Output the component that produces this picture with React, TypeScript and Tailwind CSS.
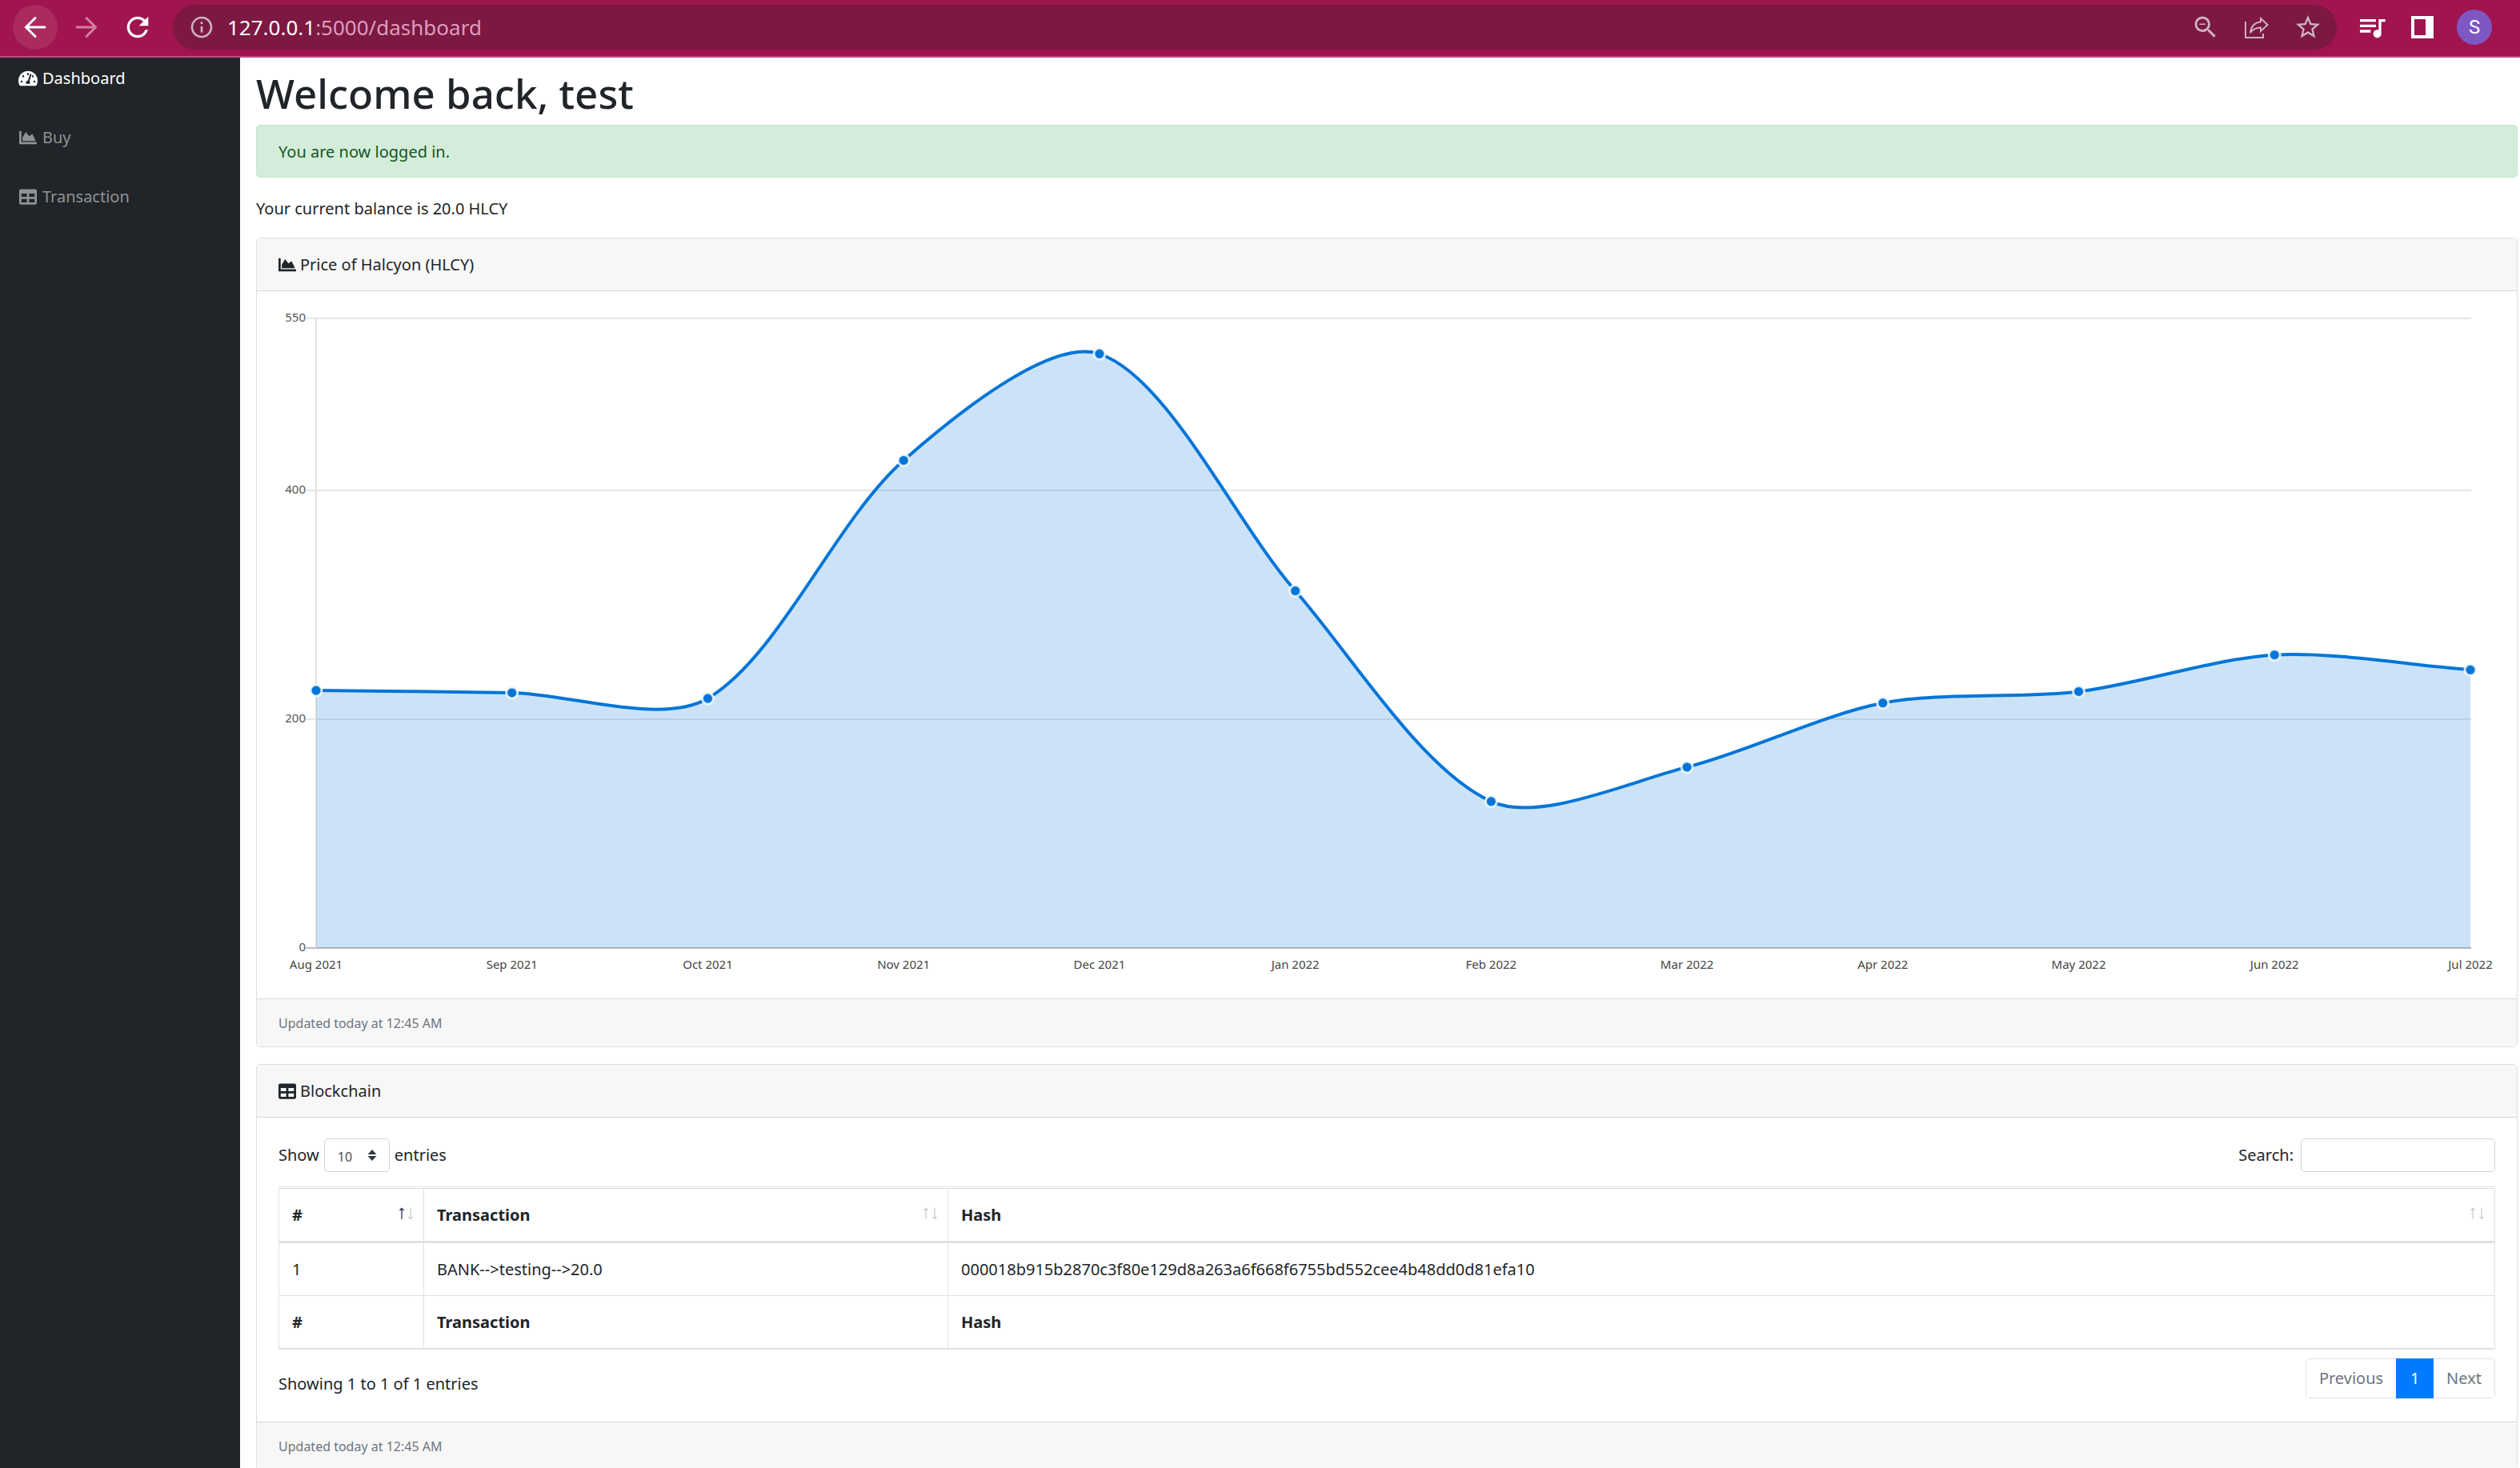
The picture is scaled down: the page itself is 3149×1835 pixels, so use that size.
import { FaChartArea, FaTable, FaTachometerAlt } from "react-icons/fa";
import { MdOutlineInfo, MdQueueMusic, MdRefresh, MdStarBorder, MdZoomOut } from "react-icons/md";

const points = [
  { label: "Aug 2021", value: 225 },
  { label: "Sep 2021", value: 223 },
  { label: "Oct 2021", value: 218 },
  { label: "Nov 2021", value: 426 },
  { label: "Dec 2021", value: 519 },
  { label: "Jan 2022", value: 312 },
  { label: "Feb 2022", value: 128 },
  { label: "Mar 2022", value: 158 },
  { label: "Apr 2022", value: 214 },
  { label: "May 2022", value: 224 },
  { label: "Jun 2022", value: 256 },
  { label: "Jul 2022", value: 243 },
];

const LEFT = 47;
const RIGHT = 2739;
const TOP = 7;
const BOTTOM = 794;
const MAX = 550;
const TENSION = 0.3;

const yOf = (v: number) => BOTTOM - (v / MAX) * (BOTTOM - TOP);
const coords = points.map((p, i) => ({
  x: LEFT + (i * (RIGHT - LEFT)) / (points.length - 1),
  y: yOf(p.value),
}));

function smoothLine() {
  const controls = coords.map((c, i) => {
    const prev = coords[i - 1] ?? c;
    const next = coords[i + 1] ?? c;
    const d01 = Math.hypot(c.x - prev.x, c.y - prev.y);
    const d12 = Math.hypot(next.x - c.x, next.y - c.y);
    const fa = (TENSION * d01) / (d01 + d12);
    const fb = (TENSION * d12) / (d01 + d12);
    return {
      before: { x: c.x - fa * (next.x - prev.x), y: c.y - fa * (next.y - prev.y) },
      after: { x: c.x + fb * (next.x - prev.x), y: c.y + fb * (next.y - prev.y) },
    };
  });
  return coords
    .map((c, i) => {
      if (i === 0) return `M${c.x} ${c.y}`;
      const a = controls[i - 1].after;
      const b = controls[i].before;
      return `C${a.x} ${a.y} ${b.x} ${b.y} ${c.x} ${c.y}`;
    })
    .join(" ");
}

function PriceChart() {
  const line = smoothLine();
  return (
    <svg viewBox="0 0 2770 830" className="block h-auto w-full overflow-visible" role="img" aria-label="Price of Halcyon by month">
      {[550, 400, 200, 0].map((v) => (
        <g key={v}>
          <line x1={LEFT - 13} x2={RIGHT + 1} y1={Math.round(yOf(v))} y2={Math.round(yOf(v))} stroke={v === 0 ? "#bcbcbc" : "#e6e6e6"} strokeWidth={2} />
          <text x={LEFT - 13} y={Math.round(yOf(v)) + 4} textAnchor="end" className="fill-[#555] text-[15px]">
            {v}
          </text>
        </g>
      ))}
      <line x1={LEFT} x2={LEFT} y1={TOP} y2={BOTTOM} stroke="#e2e2e2" strokeWidth={2} />
      <path d={`${line} L${RIGHT} ${BOTTOM} L${LEFT} ${BOTTOM} Z`} fill="rgba(2,117,216,0.2)" />
      <path d={line} fill="none" stroke="#0275d8" strokeWidth={4} />
      {coords.map((c, i) => (
        <g key={points[i].label}>
          <circle cx={c.x} cy={c.y} r={7} fill="#0275d8" stroke="rgba(255,255,255,0.8)" strokeWidth={3} />
          <text x={c.x} y={BOTTOM + 26} textAnchor="middle" className="fill-[#444] text-[15px]">
            {points[i].label}
          </text>
        </g>
      ))}
    </svg>
  );
}

function SortArrows({ active = false }: { active?: boolean }) {
  return (
    <svg viewBox="0 0 20 16" className="mb-1 h-4 w-5 shrink-0" fill="none" strokeWidth={1.3} aria-hidden="true">
      <path d="M5 15V2M2.500 4L5 1.500L7.500 4" stroke={active ? "#2b3050" : "#cccccc"} />
      <path d="M16 1V14M13.500 12L16 14.500L18.500 12" stroke="#cccccc" />
    </svg>
  );
}

function ArrowIcon({ flip = false }: { flip?: boolean }) {
  return (
    <svg viewBox="0 0 28 28" className={flip ? "size-7 -scale-x-100" : "size-7"} fill="none" stroke="currentColor" strokeWidth={3} strokeLinecap="round" aria-hidden="true">
      <path d="M26 14H3M14 2.500L2.500 14L14 25.500" />
    </svg>
  );
}

function ShareIcon() {
  return (
    <svg viewBox="0 0 30 28" className="h-7 w-[30px]" fill="none" stroke="currentColor" strokeWidth={2} aria-hidden="true">
      <path d="M1 7V27H23V22" />
      <path d="M20 3L28.500 11L20 19V14.500C14 14.500 10 16.500 7 21C8 13 12 8 20 7.200Z" />
    </svg>
  );
}

function SidePanelIcon() {
  return (
    <svg viewBox="0 0 28 28" className="size-7" aria-hidden="true">
      <path fill="currentColor" fillRule="evenodd" d="M0 0H28V28H0ZM4 4V24H18V4Z" />
    </svg>
  );
}

function BrowserBar() {
  return (
    <header className="flex h-[72px] shrink-0 items-center border-b-2 border-[#c4477c] bg-[#a0144f] pr-[35px] pb-[3px] pl-4 text-white">
      <button aria-label="Back" className="grid size-14 place-items-center rounded-full bg-[#a92b60]">
        <ArrowIcon />
      </button>
      <button aria-label="Forward" className="ml-2 grid size-14 place-items-center text-[#cf7fa3]">
        <ArrowIcon flip />
      </button>
      <button aria-label="Reload" className="ml-2 grid size-14 place-items-center">
        <MdRefresh className="size-10" />
      </button>
      <div className="ml-4 flex h-14 flex-1 items-center rounded-full bg-[#7c1842] pr-[18px] pl-5 text-[#cdb0c0]">
        <MdOutlineInfo className="size-8" />
        <div role="textbox" aria-label="Address" className="ml-4 flex-1 text-[26px] leading-9 text-[#dd9dbc]">
          <span className="text-white">127.0.0.1</span>:5000/dashboard
        </div>
        <div className="flex items-center gap-[31px]">
          <button aria-label="Zoom out"><MdZoomOut className="size-9" /></button>
          <button aria-label="Share"><ShareIcon /></button>
          <button aria-label="Bookmark"><MdStarBorder className="size-9" /></button>
        </div>
      </div>
      <div className="ml-6 flex items-center gap-[29px]">
        <button aria-label="Media controls"><MdQueueMusic className="size-10" /></button>
        <button aria-label="Side panel"><SidePanelIcon /></button>
        <button aria-label="Profile" className="grid size-11 place-items-center rounded-full bg-[#7e57c2] font-[Roboto] text-2xl">S</button>
      </div>
    </header>
  );
}

function NavLink({ href, icon, active = false, children }: { href: string; icon: React.ReactNode; active?: boolean; children: React.ReactNode }) {
  return (
    <li>
      <a href={href} className={active ? "flex items-center gap-[6px] text-white" : "flex items-center gap-[6px]"}>
        <span className="grid w-6 place-items-center">{icon}</span>
        {children}
      </a>
    </li>
  );
}

function CardHeader({ icon, children }: { icon: React.ReactNode; children: React.ReactNode }) {
  return (
    <h2 className="flex h-[66px] items-center gap-[5px] border-b border-[#d8d8d8] bg-[#f7f7f7] px-[27px]">
      {icon}
      {children}
    </h2>
  );
}

function CardFooter() {
  return (
    <p className="flex h-[60px] items-center border-t border-[#d8d8d8] bg-[#f7f7f7] px-[27px] text-base text-[#6c757d]">
      Updated today at 12:45 AM
    </p>
  );
}

const columns = ["#", "Transaction", "Hash"];
const row = ["1", "BANK-->testing-->20.0", "000018b915b2870c3f80e129d8a263a6f668f6755bd552cee4b48dd0d81efa10"];

export default function App() {
  return (
    <div className="flex h-screen flex-col overflow-hidden bg-white font-['Noto_Sans','Open_Sans',sans-serif] text-xl text-[#212529]">
      <BrowserBar />
      <div className="flex min-h-0 flex-1">
        <nav className="w-[300px] shrink-0 bg-[#212529] pt-[10px]">
          <ul className="flex flex-col gap-[42px] pl-[23px] leading-8 text-[#909294]">
            <NavLink href="#dashboard" active icon={<FaTachometerAlt className="size-6" />}>Dashboard</NavLink>
            <NavLink href="#buy" icon={<FaChartArea className="size-[22px]" />}>Buy</NavLink>
            <NavLink href="#transaction" icon={<FaTable className="size-[22px]" />}>Transaction</NavLink>
          </ul>
        </nav>
        <main className="min-w-0 flex-1 overflow-y-auto pr-[3px] pl-5 [scrollbar-width:none]">
          <h1 className="pt-3 text-[51px] leading-[64px] font-medium">Welcome back, test</h1>
          <div className="mt-2 flex h-[66px] items-center rounded-[5px] border border-[#c3e6cb] bg-[#d4edda] px-[27px] pt-0.5 text-[#155724]">
            You are now logged in.
          </div>
          <p className="mt-[23px] mb-5 leading-8">Your current balance is 20.0 HLCY</p>

          <section className="overflow-hidden rounded-[5px] border border-[#dfdfdf]">
            <CardHeader icon={<FaChartArea className="size-[22px]" />}>Price of Halcyon (HLCY)</CardHeader>
            <div className="p-[27px]"><PriceChart /></div>
            <CardFooter />
          </section>

          <section className="mt-[21px] overflow-hidden rounded-[5px] border border-[#dfdfdf]">
            <CardHeader icon={<FaTable className="size-[22px]" />}>Blockchain</CardHeader>
            <div className="px-[27px] pt-[26px] pb-[29px]">
              <div className="flex items-center justify-between">
                <div className="flex items-center gap-[6px]">
                  <label htmlFor="length">Show</label>
                  <div className="relative">
                    <select id="length" className="h-[42px] w-[82px] appearance-none rounded-[5px] border border-[#ced4da] bg-white pt-1 pl-4 text-base text-[#495057]">
                      <option>10</option>
                    </select>
                    <svg viewBox="0 0 12 14" className="pointer-events-none absolute top-3.5 right-4 h-3.5 w-3" fill="#343a40" aria-hidden="true">
                      <path d="M6 0L11.500 6H0.500ZM6 14L0.500 8H11.500Z" />
                    </svg>
                  </div>
                  <span>entries</span>
                </div>
                <div className="flex items-center gap-[9px]">
                  <label htmlFor="search">Search:</label>
                  <input id="search" type="search" className="h-[42px] w-[243px] rounded-[5px] border border-[#ced4da] px-3" />
                </div>
              </div>
              <table className="mt-[18px] w-full border-separate border-spacing-0 border-t border-[#dee2e6] pt-px text-left">
                <thead>
                  <tr>
                    {columns.map((c, i) => (
                      <th key={c} className="h-[69px] border-t border-b-3 border-l border-[#dee2e6] py-0 pr-3 pl-4 first:w-[181px] last:border-r nth-2:w-[655px]">
                        <div className="flex items-center justify-between">{c}<SortArrows active={i === 0} /></div>
                      </th>
                    ))}
                  </tr>
                </thead>
                <tbody>
                  <tr>
                    {row.map((c) => (
                      <td key={c} className="h-[65px] border-l border-[#dee2e6] pl-4 last:border-r">{c}</td>
                    ))}
                  </tr>
                </tbody>
                <tfoot>
                  <tr>
                    {columns.map((c) => (
                      <th key={c} className="h-[68px] border-t border-b-2 border-l border-[#dee2e6] pl-4 last:border-r">{c}</th>
                    ))}
                  </tr>
                </tfoot>
              </table>
              <div className="mt-[11px] flex justify-between">
                <p className="pt-4 leading-8">Showing 1 to 1 of 1 entries</p>
                <div className="flex h-[50px] overflow-hidden rounded-[5px] text-[#6c757d]">
                  <button className="rounded-l-[5px] border border-r-0 border-[#dee2e6] px-4">Previous</button>
                  <button className="w-[47px] bg-[#007bff] text-white">1</button>
                  <button className="rounded-r-[5px] border border-l-0 border-[#dee2e6] px-4">Next</button>
                </div>
              </div>
            </div>
            <CardFooter />
          </section>
        </main>
      </div>
    </div>
  );
}
